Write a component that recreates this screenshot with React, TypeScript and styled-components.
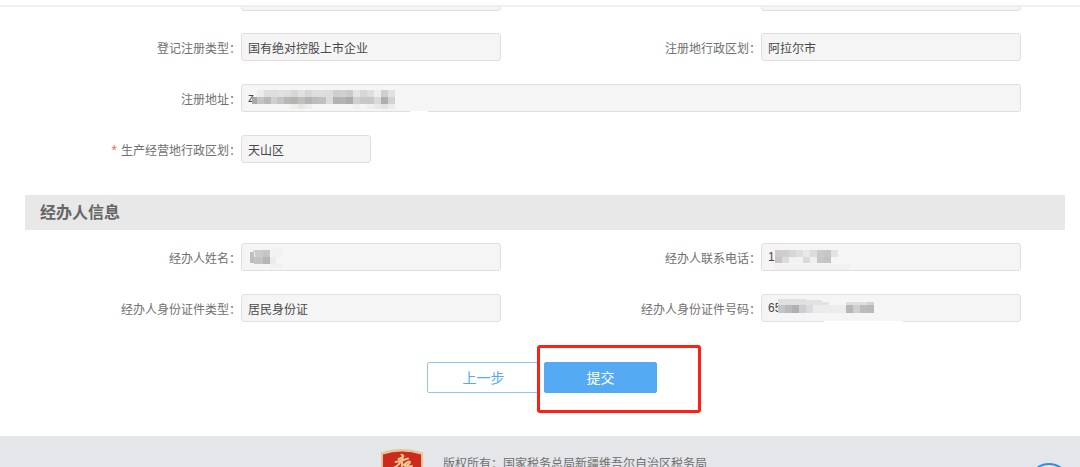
import React from "react";
import styled, { createGlobalStyle } from "styled-components";

const GlobalStyle = createGlobalStyle`
  * { box-sizing: border-box; }
  body {
    margin: 0;
    background: #fff;
    color: #707070;
    font: 12px/16px "Liberation Sans", "Noto Sans CJK SC", sans-serif;
  }
`;

const Page = styled.div`
  height: 100vh;
  overflow: hidden;
`;

const TopBar = styled.header`
  height: 7px;
  border-bottom: 2px solid #f0f0f0;
`;

const Form = styled.form`
  margin: 0 15px 0 25px;
`;

const FieldGrid = styled.div`
  display: grid;
  grid-template-columns: 216fr 260fr 260fr 260fr;
  row-gap: 23px;
  align-items: center;
  padding-right: 44px;
`;

/* Bottom edge of the row that is scrolled under the top bar. */
const ScrolledRow = styled(FieldGrid)`
  height: 4px;
  overflow: hidden;
  align-items: end;
  align-content: end;
  margin-bottom: 22px;
`;

const Label = styled.label`
  text-align: right;
  white-space: nowrap;
  padding-top: 3px;
`;

const Required = styled.span`
  color: #ff6b45;
  font-size: 14px;
  margin-right: 4px;
`;

const Field = styled.div<{ $wide?: boolean }>`
  position: relative;
  grid-column: ${(p) => (p.$wide ? "span 3" : "auto")};
`;

const TextInput = styled.input<{ $half?: boolean }>`
  display: block;
  width: ${(p) => (p.$half ? "50%" : "100%")};
  height: 28px;
  padding: 0 6px;
  border: 1px solid #dfdfdf;
  border-radius: 3px;
  background: #f5f5f5;
  color: #484848;
  font: inherit;
  outline: none;
`;

const Mask = styled.svg`
  position: absolute;
  left: 0;
  top: 0;
  pointer-events: none;
`;

const SectionTitle = styled.h2`
  margin: 32px 0 13px;
  padding: 0 15px;
  background: #e8e8e8;
  font-size: 16px;
  line-height: 35px;
  font-weight: 700;
  color: #666;
`;

const Actions = styled.div`
  display: flex;
  justify-content: center;
  gap: 4px;
  padding: 40px 0 43px;
  margin-right: 6px;
`;

const Button = styled.button<{ $primary?: boolean }>`
  width: 113px;
  height: 31px;
  padding: 0;
  border: 1px solid ${(p) => (p.$primary ? "#54aaf3" : "#8ec7f7")};
  border-radius: 2px;
  background: ${(p) => (p.$primary ? "#54aaf3" : "#fff")};
  color: ${(p) => (p.$primary ? "#fff" : "#54aaf3")};
  font: inherit;
  font-size: 14px;
`;

const Highlighted = styled.div`
  position: relative;
  display: flex;
`;

const Highlight = styled.span`
  position: absolute;
  left: -7px;
  top: -17px;
  width: 164px;
  height: 68px;
  border: 3px solid #fd2015;
  border-radius: 3px;
  pointer-events: none;
`;

const Footer = styled.footer`
  position: relative;
  display: flex;
  justify-content: center;
  gap: 20px;
  height: 120px;
  padding: 12px 0;
  background: #e5e6ea;
`;

const Copyright = styled.p`
  margin: 0;
  padding: 8px 0;
  margin-right: -8px;
`;

const Emblem = styled.svg`
  display: block;
  flex: none;
`;

const HelpButton = styled.button`
  position: absolute;
  right: 10px;
  top: 27px;
  width: 42px;
  height: 42px;
  border: 2px solid #2d8cf0;
  border-radius: 50%;
  background: #e9eef6;
`;

type Block = [x: number, y: number, w: number, h: number, fill: string];

const row = (x: number, y: number, w: number, h: number, fills: string[]): Block[] =>
  fills.map((fill, i) => [x + i * w, y, w, h, fill]);

const addressMask: Block[] = [
  ...row(15.7, 6, 6.9, 7, [
    "#ececec", "#dedede", "#dddddd", "#e1e1e1", "#dddddd", "#d6d6d6", "#e0e0e0", "#d6d6d6", "#dedede", "#dedede",
    "#dcdcdc", "#cecece", "#d0d0d0", "#cacaca", "#e4e4e4", "#d5d6d7", "#dedede", "#eeeeee", "#cecfcf", "#dfe1e3",
  ]),
  ...row(11, 13, 5, 7, ["#a9a9a9"]),
  ...row(15.7, 13, 6.9, 7, [
    "#c4c4c4", "#b8b8b8", "#d0d0d0", "#c4c4c0", "#b9b8b4", "#b5b4b0", "#c0bfbb", "#b4b4b4", "#bfbcba", "#c4bfbf",
    "#d7dce1", "#b2b2b2", "#b4b4b2", "#acacab", "#d0d0d0", "#c8c8c8", "#cbc7c5", "#d8dade", "#aeaeac", "#d0d2d4",
  ]),
  ...row(50.2, 20, 6.9, 5, ["#eeeeee", "#e6e6e6", "#eeeeee"]),
  ...row(112.3, 20, 6.9, 5, ["#f0f0f0", "#f5f5f5", "#efefef", "#e9e9e9", "#e2e2e2", "#ececec"]),
  [169, 27, 18, 1, "#fff"],
];

const nameMask: Block[] = [
  [9, 9, 4, 11, "#bdbdbd"],
  [12, 7, 2, 3, "#d5d5d5"],
  [14, 7, 8, 7, "#cbcbcb"],
  [22, 7, 7, 7, "#c5c5c5"],
  [13, 14, 9, 7, "#c3c3c3"],
  [22, 14, 7, 7, "#b7b5b5"],
  [29, 14, 6, 7, "#ececec"],
  [30, 5, 12, 9, "#f2f2f2"],
  [30, 21, 12, 4, "#f0f0f0"],
];

const phoneMask: Block[] = [
  ...row(14, 7, 7, 7, ["#cfcccb", "#cfcfcf", "#d5d6d8", "#dddee0", "#e8e8e8", "#dcdcdc", "#cacaca", "#c7c6c5", "#e1e4e7"]),
  ...row(14, 14, 7, 6, ["#c9c6c4", "#dcdcdc", "#f2f2f2", "#f2f2f2", "#d7dade", "#eeeeee", "#c6c7c8", "#c2c3c4"]),
  [13, 21, 76, 6, "#f1f1f1"],
];

const idMask: Block[] = [
  [17, 5, 28, 6, "#dedfdf"],
  [45, 6, 16, 5, "#e0e3e0"],
  [61, 8, 7, 3, "#e0e3e0"],
  ...row(17, 11, 7, 8, ["#c2c4c5", "#b9bab9", "#aeb1b1", "#cdcecf", "#dadbdd", "#ebebeb", "#ebebeb", "#ececec", "#ededed", "#ececec"]),
  ...row(85, 8, 7, 3, ["#dedede", "#dedede", "#e0e0e0", "#d2d2d2"]),
  ...row(85, 11, 7, 8, ["#bcb5b5", "#cfcfcf", "#bcbcbc", "#b9b9b9"]),
  [63, 27, 79, 1, "#fff"],
];

function Mosaic({ blocks }: { blocks: Block[] }) {
  return (
    <Mask width="200" height="28" viewBox="0 0 200 28" aria-hidden="true">
      {blocks.map(([x, y, w, h, fill], i) => (
        <rect key={i} x={x} y={y} width={w} height={h} fill={fill} shapeRendering="crispEdges" />
      ))}
    </Mask>
  );
}

interface FormFieldProps {
  id: string;
  label: string;
  value: string;
  required?: boolean;
  wide?: boolean;
  half?: boolean;
  mask?: Block[];
}

function FormField({ id, label, value, required, wide, half, mask }: FormFieldProps) {
  return (
    <>
      <Label htmlFor={id}>
        {required && <Required>*</Required>}
        {label}：
      </Label>
      <Field $wide={wide}>
        <TextInput id={id} defaultValue={value} readOnly $half={half} />
        {mask && <Mosaic blocks={mask} />}
      </Field>
    </>
  );
}

export default function App() {
  return (
    <Page>
      <GlobalStyle />
      <TopBar />
      <Form onSubmit={(e) => e.preventDefault()}>
        <ScrolledRow>
          <span />
          <TextInput readOnly tabIndex={-1} aria-hidden="true" />
          <span />
          <TextInput readOnly tabIndex={-1} aria-hidden="true" />
        </ScrolledRow>
        <FieldGrid>
          <FormField id="regType" label="登记注册类型" value="国有绝对控股上市企业" />
          <FormField id="regArea" label="注册地行政区划" value="阿拉尔市" />
          <FormField id="address" label="注册地址" value="z" wide mask={addressMask} />
          <FormField id="bizArea" label="生产经营地行政区划" value="天山区" required half />
        </FieldGrid>
        <SectionTitle>经办人信息</SectionTitle>
        <FieldGrid>
          <FormField id="name" label="经办人姓名" value="" mask={nameMask} />
          <FormField id="phone" label="经办人联系电话" value="1" mask={phoneMask} />
          <FormField id="idType" label="经办人身份证件类型" value="居民身份证" />
          <FormField id="idNo" label="经办人身份证件号码" value="65" mask={idMask} />
        </FieldGrid>
        <Actions>
          <Button type="button">上一步</Button>
          <Highlighted>
            <Button type="submit" $primary>提交</Button>
            <Highlight />
          </Highlighted>
        </Actions>
      </Form>
      <Footer>
        <Emblem width="42" height="50" viewBox="0 0 42 50" aria-hidden="true">
          <path d="M0 4.500Q10 1 21 1Q32 1 42 4.500V30Q42 42 21 50Q0 42 0 30Z" fill="#e6c595" />
          <path d="M2 6.500Q11 3.500 21 3.500Q31 3.500 40 6.500V30Q40 40 21 47.500Q2 40 2 30Z" fill="#cb2a1c" />
          <g fill="none" stroke="#eec692" strokeWidth="2" strokeLinecap="round" strokeLinejoin="round">
            <path d="M20.500 6.500L22.500 8Q21.500 10 17.500 11" />
            <path d="M21.500 9Q21 15 20.500 24" />
            <path d="M14.500 14Q20 13 27 10.500" />
            <path d="M19.500 14Q17 18 12.500 20" />
            <path d="M22.500 17Q28 12.500 29 14Q29 16 24 18Q28 18.500 31 18" />
          </g>
        </Emblem>
        <Copyright>版权所有：国家税务总局新疆维吾尔自治区税务局</Copyright>
        <HelpButton type="button" aria-label="帮助" />
      </Footer>
    </Page>
  );
}
